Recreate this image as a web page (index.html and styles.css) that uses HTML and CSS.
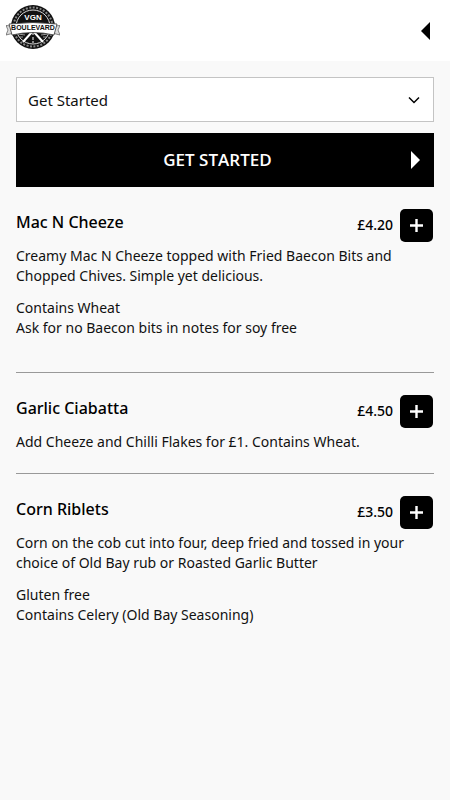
FILE: index.html
```html
<!DOCTYPE html>
<html lang="en">
<head>
<meta charset="utf-8">
<meta name="viewport" content="width=device-width, initial-scale=1">
<title>VGN Boulevard</title>
<link rel="stylesheet" href="styles.css">
</head>
<body>
<header class="site-header">
  <a class="logo" href="#" aria-label="VGN Boulevard">
    <svg width="54" height="46" viewBox="0 0 54 46">
      <circle cx="27" cy="22" r="22" fill="#111"/>
      <circle cx="27" cy="22" r="19.500" fill="none" stroke="#888" stroke-width="2" stroke-dasharray="2 1.500"/>
      <circle cx="27" cy="22" r="17" fill="#111" stroke="#ddd" stroke-width="1"/>
      <path d="M26 27 17 37M28 27 37 37" stroke="#fff" stroke-width="2"/>
      <path d="M27 28v2M27 32v3M27 36v2" stroke="#fff" stroke-width="1"/>
      <path d="M12 29l7 1M13 32l4 0M42 29l-7 1M41 32l-4 0" stroke="#999" stroke-width="1"/>
      <path d="M5 21 0 20.500 2 25 0 30 6 28.500ZM49 21l5-.500-2 4.500 2 5-6-1.500Z" fill="#ddd" stroke="#555" stroke-width=".7"/>
      <path d="M3 19Q27 16 51 19L48 30Q27 25 6 30Z" fill="#fff" stroke="#333" stroke-width=".8"/>
      <text class="logo-name" x="27" y="15">VGN</text>
      <text class="logo-banner" x="27" y="25">BOULEVARD</text>
    </svg>
  </a>
  <button class="back" type="button" aria-label="Back">
    <svg width="9" height="18" viewBox="0 0 9 18"><path d="M9 0v18L0 9Z" fill="#000"/></svg>
  </button>
</header>
<main class="menu">
  <div class="picker">
    <select class="picker-select" aria-label="Menu section">
      <option>Get Started</option>
    </select>
    <svg class="picker-arrow" width="12" height="8" viewBox="0 0 12 8"><path d="M1 1.500 6 6.500 11 1.500" fill="none" stroke="#000" stroke-width="1.500"/></svg>
  </div>
  <button class="section-button" type="button">
    <span>GET STARTED</span>
    <svg width="9" height="18" viewBox="0 0 9 18"><path d="M0 0v18L9 9Z" fill="#fff"/></svg>
  </button>
  <article class="item">
    <div class="item-head">
      <h2>Mac N Cheeze</h2>
      <span class="price">£4.20</span>
      <button class="add" type="button" aria-label="Add Mac N Cheeze"><svg width="13" height="13" viewBox="0 0 13 13"><path d="M6.500 0v13M0 6.500h13" stroke="#fff" stroke-width="2.400"/></svg></button>
    </div>
    <div class="item-text item-text-long">
      <p>Creamy Mac N Cheeze topped with Fried Baecon Bits and Chopped Chives. Simple yet delicious.</p>
      <p>Contains Wheat<br>Ask for no Baecon bits in notes for soy free</p>
    </div>
  </article>
  <article class="item">
    <div class="item-head">
      <h2>Garlic Ciabatta</h2>
      <span class="price">£4.50</span>
      <button class="add" type="button" aria-label="Add Garlic Ciabatta"><svg width="13" height="13" viewBox="0 0 13 13"><path d="M6.500 0v13M0 6.500h13" stroke="#fff" stroke-width="2.400"/></svg></button>
    </div>
    <div class="item-text">
      <p>Add Cheeze and Chilli Flakes for £1. Contains Wheat.</p>
    </div>
  </article>
  <article class="item">
    <div class="item-head">
      <h2>Corn Riblets</h2>
      <span class="price">£3.50</span>
      <button class="add" type="button" aria-label="Add Corn Riblets"><svg width="13" height="13" viewBox="0 0 13 13"><path d="M6.500 0v13M0 6.500h13" stroke="#fff" stroke-width="2.400"/></svg></button>
    </div>
    <div class="item-text">
      <p>Corn on the cob cut into four, deep fried and tossed in your choice of Old Bay rub or Roasted Garlic Butter</p>
      <p>Gluten free<br>Contains Celery (Old Bay Seasoning)</p>
    </div>
  </article>
</main>
</body>
</html>
```

FILE: styles.css
```css
* {
  box-sizing: border-box;
}

body {
  margin: 0;
  background: #f9f9f9;
  color: #000;
  font: 14px/20px "Noto Sans", "Open Sans", sans-serif;
}

button {
  padding: 0;
  border: 0;
  font: inherit;
  cursor: pointer;
}

svg {
  display: block;
}

.site-header {
  display: flex;
  align-items: center;
  justify-content: space-between;
  padding: 5px 20px 10px 6px;
  background: #fff;
}

.logo-name,
.logo-banner {
  font-family: "Liberation Sans", sans-serif;
  font-weight: 700;
  text-anchor: middle;
}

.logo-name {
  font-size: 8px;
  fill: #fff;
}

.logo-banner {
  font-size: 7px;
  fill: #111;
}

.back {
  padding-top: 5px;
  background: none;
}

.menu {
  padding: 16px;
}

.picker {
  display: grid;
  align-items: center;
  margin-bottom: 11px;
}

.picker-select,
.picker-arrow {
  grid-area: 1 / 1;
}

.picker-select {
  width: 100%;
  height: 45px;
  padding: 0 11px;
  appearance: none;
  border: 1px solid #c4c4c4;
  border-radius: 0;
  background: #fff;
  color: #111;
  font: inherit;
  font-size: 15px;
}

.picker-arrow {
  justify-self: end;
  margin-right: 14px;
  pointer-events: none;
}

.section-button {
  display: grid;
  grid-template-columns: 1fr auto;
  align-items: center;
  width: 100%;
  height: 54px;
  padding: 0 14px 0 8px;
  background: #000;
  color: #fff;
  font-family: "Open Sans", "Noto Sans", sans-serif;
  font-size: 17px;
  font-weight: 600;
}

.item {
  padding: 22px 0 21px;
}

.item + .item {
  border-top: 1px solid #999;
}

.item-head {
  display: flex;
  align-items: center;
  padding-right: 1px;
}

h2 {
  flex: 1;
  margin: 0;
  padding-bottom: 7px;
  font-size: 16px;
  font-weight: 500;
}

.price {
  margin-right: 7px;
  padding-bottom: 1px;
  font-weight: 500;
}

.add {
  display: grid;
  place-items: center;
  width: 33px;
  height: 33px;
  border-radius: 5px;
  background: #000;
}

.item-text {
  display: grid;
  gap: 12px;
  padding-top: 4px;
  color: #111;
}

.item-text-long {
  padding-bottom: 13px;
}

p {
  margin: 0;
}
```
